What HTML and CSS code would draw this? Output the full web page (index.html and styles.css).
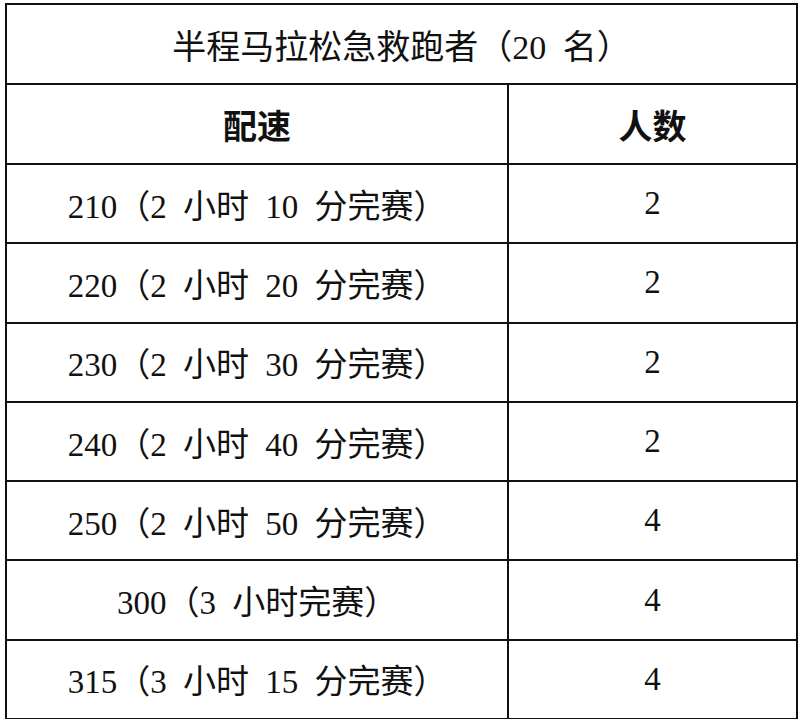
FILE: index.html
```html
<!DOCTYPE html>
<html lang="zh">
<head>
<meta charset="utf-8">
<link rel="stylesheet" href="styles.css">
</head>
<body>
<table class="pace-table">
  <colgroup><col class="col-pace"><col class="col-count"></colgroup>
  <tr class="title-row"><td colspan="2">半程马拉松急救跑者（20 名）</td></tr>
  <tr class="head-row"><td>配速</td><td>人数</td></tr>
  <tr><td>210（2 小时 10 分完赛）</td><td>2</td></tr>
  <tr><td>220（2 小时 20 分完赛）</td><td>2</td></tr>
  <tr><td>230（2 小时 30 分完赛）</td><td>2</td></tr>
  <tr><td>240（2 小时 40 分完赛）</td><td>2</td></tr>
  <tr><td>250（2 小时 50 分完赛）</td><td>4</td></tr>
  <tr><td>300（3 小时完赛）</td><td>4</td></tr>
  <tr><td>315（3 小时 15 分完赛）</td><td>4</td></tr>
</table>
</body>
</html>
```
FILE: styles.css
```css
html, body {
  margin: 0;
  padding: 0;
  background: #fff;
}
body {
  padding: 3px 0 0 5px;
}
.pace-table {
  border-collapse: collapse;
  width: 791px;
  table-layout: fixed;
  font-family: "Liberation Serif", "Noto Sans CJK SC", serif;
  font-size: 33px;
  word-spacing: 8px;
  color: #111;
}
.col-pace { width: 502px; }
.col-count { width: 289px; }
.pace-table td {
  border: 2px solid #111;
  text-align: center;
  vertical-align: middle;
  height: 77.3px;
  padding: 0;
  white-space: nowrap;
}
.title-row td {
  height: 78px;
  font-size: 34px;
}
.head-row td {
  height: 78px;
  font-size: 34px;
  font-weight: 600;
}
```
